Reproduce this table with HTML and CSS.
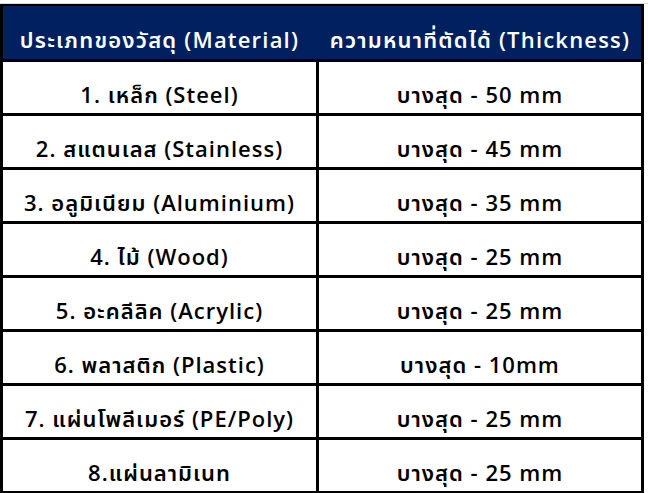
FILE: index.html
```html
<!DOCTYPE html>
<html lang="th">
<head>
<meta charset="utf-8">
<title>Material Thickness</title>
<link rel="stylesheet" href="styles.css">
</head>
<body>
<div class="gridline"></div>
<div class="sheet">
  <div class="row head">
    <div class="cell c1">ประเภทของวัสดุ (Material)</div>
    <div class="cell c2">ความหนาที่ตัดได้ (Thickness)</div>
  </div>
  <div class="row">
    <div class="cell c1">1. เหล็ก (Steel)</div>
    <div class="cell c2">บางสุด - 50 mm</div>
  </div>
  <div class="row">
    <div class="cell c1">2. สแตนเลส (Stainless)</div>
    <div class="cell c2">บางสุด - 45 mm</div>
  </div>
  <div class="row">
    <div class="cell c1">3. อลูมิเนียม (Aluminium)</div>
    <div class="cell c2">บางสุด - 35 mm</div>
  </div>
  <div class="row">
    <div class="cell c1">4. ไม้ (Wood)</div>
    <div class="cell c2">บางสุด - 25 mm</div>
  </div>
  <div class="row">
    <div class="cell c1">5. อะคลีลิค (Acrylic)</div>
    <div class="cell c2">บางสุด - 25 mm</div>
  </div>
  <div class="row">
    <div class="cell c1">6. พลาสติก (Plastic)</div>
    <div class="cell c2">บางสุด - 10mm</div>
  </div>
  <div class="row">
    <div class="cell c1">7. แผ่นโพลีเมอร์ (PE/Poly)</div>
    <div class="cell c2">บางสุด - 25 mm</div>
  </div>
  <div class="row last">
    <div class="cell c1">8.แผ่นลามิเนท</div>
    <div class="cell c2">บางสุด - 25 mm</div>
  </div>
</div>
</body>
</html>
```
FILE: styles.css
```css
html, body {
  margin: 0;
  padding: 0;
  background: #ffffff;
}
body {
  font-family: "Open Sans", "Noto Sans Thai", "Noto Sans", sans-serif;
  color: #000000;
}
.gridline {
  height: 3px;
  border-bottom: 1px solid #d9d9d9;
}
.sheet {
  width: 638px;
  border: 3px solid #000;
  border-top-width: 2px;
}
.row {
  display: flex;
  height: 51px;
  border-bottom: 3px solid #000;
}
.row.last {
  border-bottom: none;
}
.row.head {
  height: 53px;
  background: #002060;
  color: #ffffff;
}
.cell {
  display: flex;
  align-items: flex-end;
  justify-content: center;
  font-size: 22px;
  font-weight: 600;
  line-height: 24px;
  letter-spacing: 1px;
  padding-bottom: 7px;
  box-sizing: border-box;
  white-space: nowrap;
}
.c1 {
  width: 316px;
  border-right: 3px solid #000;
}
.head .c1 {
  border-right: 3px solid #002060;
}
.c2 {
  flex: 1;
}
.head .cell {
  padding-bottom: 8px;
  letter-spacing: 1.2px;
}
```
